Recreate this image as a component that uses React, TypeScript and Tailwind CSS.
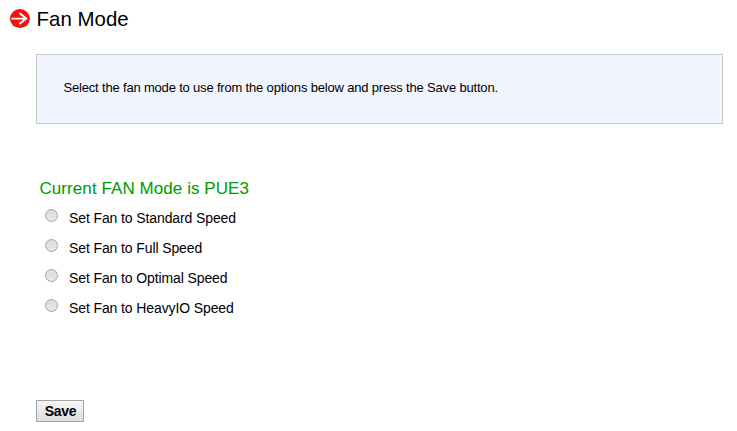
import { useState } from "react";

const fanModes = [
  { id: "standard", label: "Set Fan to Standard Speed" },
  { id: "full", label: "Set Fan to Full Speed" },
  { id: "optimal", label: "Set Fan to Optimal Speed" },
  { id: "heavyio", label: "Set Fan to HeavyIO Speed" },
];

function ArrowBadge() {
  return (
    <svg className="h-5 w-[21px] shrink-0" viewBox="0 0 21 20" aria-hidden="true">
      <ellipse cx="10.9" cy="9.6" rx="10" ry="9.5" fill="#fb0d0d" />
      <path d="M2.4 9.6h14.4M10.4 4.1l6.9 5.5-6.9 5.5" fill="none" stroke="#fff" strokeWidth="1.9" />
    </svg>
  );
}

export default function App() {
  const [mode, setMode] = useState<string | null>(null);

  return (
    <main className="h-[431px] w-[737px] overflow-hidden bg-white font-['Liberation_Sans',Arial,sans-serif] text-black">
      <header className="flex h-[54px] pt-[9px] pl-[9px]">
        <ArrowBadge />
        <h1 className="ml-[6.5px] text-[20.4px] leading-5 tracking-[0.05px]">Fan Mode</h1>
      </header>

      <p className="ml-9 h-[70px] w-[687px] border border-[#c8c8cb] bg-[#f0f5ff] pt-6 pl-[26.5px] text-[13px] leading-[18px] tracking-[-0.18px]">
        Select the fan mode to use from the options below and press the Save button.
      </p>

      <form className="flex flex-col items-start pt-[55px] pl-9" onSubmit={(e) => e.preventDefault()}>
        <h2 className="ml-[3.5px] text-[17px] leading-5 tracking-[0.07px] text-[#009900]">Current FAN Mode is PUE3</h2>
        <div className="mt-1 ml-[9px]">
          {fanModes.map((item) => (
            <label key={item.id} className="flex h-[30px] text-[14px] leading-[30px] tracking-[-0.11px]">
              <input
                type="radio"
                name="fanMode"
                value={item.id}
                checked={mode === item.id}
                onChange={() => setMode(item.id)}
                className="mt-[6px] mr-[11px] h-[13px] w-[13px] appearance-none rounded-full border border-[#a5a5a5] bg-linear-to-b from-[#dcdcdc] to-[#e8e8e8] checked:bg-[#555]"
              />
              {item.label}
            </label>
          ))}
        </div>
        <button
          type="submit"
          className="mt-[77px] h-[22px] w-12 border border-[#a3a3a3] bg-linear-to-b from-[#f6f6f6] to-[#dddddd] pl-px text-[14px] leading-5 font-bold tracking-[-0.3px]"
        >
          Save
        </button>
      </form>
    </main>
  );
}
